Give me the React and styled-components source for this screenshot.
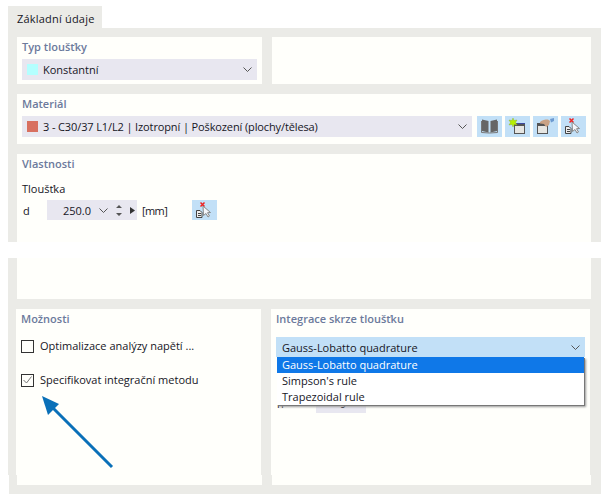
import React from "react"
import styled, { createGlobalStyle } from "styled-components"

const Global = createGlobalStyle`
  html, body { margin: 0; padding: 0; background: #fff; }
  body { font-family: "Open Sans", "Noto Sans", sans-serif; font-size: 11px; color: #16161f; }
`

const Page = styled.div`
  width: 601px;
  height: 494px;
  overflow: hidden;
  padding: 6px 0 0 8px;
  box-sizing: border-box;
`

const Tab = styled.div`
  width: 94px;
  height: 22px;
  background: #ebebe7;
  line-height: 26px;
  padding-left: 9px;
  box-sizing: border-box;
  letter-spacing: 0.2px;
`

const TopSheet = styled.div`
  background: #ebebe7;
  height: 214px;
  padding: 9px 10px 0 9px;
  box-sizing: border-box;
  display: flex;
  flex-direction: column;
  gap: 10px;
`

const MiddleSheet = styled.div`
  background: #ebebe7;
  height: 217px;
  margin-top: 16px;
  padding: 0 10px 0 9px;
  box-sizing: border-box;
  display: flex;
  flex-direction: column;
  gap: 10px;
`

const BottomSheet = styled.div`
  background: #ebebe7;
  height: 19px;
  margin-left: 1px;
  padding-left: 8px;
  box-sizing: border-box;
`

const Columns = styled.div`
  display: grid;
  grid-template-columns: 245px 319px;
  column-gap: 10px;
  transform: ${p => (p.$shift ? "translateX(-1px)" : "none")};
`

const Card = styled.section`
  background: #fffffb;
  box-sizing: border-box;
  height: ${p => p.$height}px;
  flex: ${p => (p.$fill ? "1" : "none")};
  padding: 2px 5px 0;
  min-width: 0;
`

const OverlayCard = styled(Card)`
  position: relative;
`

const CardTitle = styled.h3`
  margin: 0;
  font-size: 11px;
  line-height: 16px;
  font-weight: 600;
  color: #6c7a9c;
`

const Select = styled.div`
  margin-top: ${p => p.$top || 4}px;
  flex: 1;
  height: ${p => p.$height || 21}px;
  background: ${p => (p.$active ? "#c2e0f7" : "#e8e7f0")};
  display: flex;
  align-items: center;
  padding: 0 5px 0 ${p => (p.$active ? 6 : 5)}px;
  gap: 5px;
  letter-spacing: ${p => p.$spacing || 0}px;
`

const Swatch = styled.span`
  width: 11px;
  height: 11px;
  background: ${p => p.$color};
`

const Grow = styled.span`
  flex: 1;
`

const Chevron = () => (
  <svg width="9" height="5" viewBox="0 0 9 5" fill="none" stroke="#555" strokeWidth="1">
    <path d="M.5.5l4 4 4-4" />
  </svg>
)

const BlueButton = styled.button`
  border: 0;
  padding: 0;
  width: 25px;
  height: ${p => p.$height || 21}px;
  background: #c2e0f7;
  display: block;
  overflow: hidden;
  svg { display: block; }
`

const Tools = styled.div`
  display: flex;
  gap: 3px;
  margin: 4px 0 0 5px;
`

const FlexLine = styled.div`
  display: flex;
`

const Book = () => (
  <svg width="25" height="21" viewBox="0 0 25 21">
    <path d="M5 3.500l6.500 1.500v11.500L5 15z" fill="#666" />
    <path d="M20 3.500L13.500 5v11.500L20 15z" fill="#666" />
    <path d="M4.500 5v11.500l8 .5 8-.5V5" fill="none" stroke="#777" />
  </svg>
)

const Window = () => (
  <>
    <rect x="9.500" y="7.500" width="10" height="10" fill="#e6e6e2" stroke="#555" />
    <rect x="9" y="7" width="11" height="3" fill="#555" />
  </>
)

const NewWindow = () => (
  <svg width="25" height="21" viewBox="0 0 25 21">
    <Window />
    <rect x="12" y="7" width="8" height="1" fill="#3b4aa0" />
    <path d="M8 2l1 2.500 3-.5-1.500 2.500L12 9l-3-.5L8 11 7 8.500 4 9l1.500-2.500L4 4l3 .5z" fill="#b5f000" stroke="#8aa820" strokeWidth=".4" />
  </svg>
)

const HandWindow = () => (
  <svg width="25" height="21" viewBox="0 0 25 21">
    <rect x="4.500" y="7.500" width="10" height="10" fill="#e6e6e2" stroke="#555" />
    <rect x="4" y="7" width="11" height="3" fill="#555" />
    <path d="M7 6c2-2 5-2.500 8-2.500l2 1.500-1 4-3 2-2-3-4-.5z" fill="#c9a285" />
    <path d="M17 3l4-1v3l-3 1.500z" fill="#6d9ad0" />
  </svg>
)

const PickIcon = () => (
  <svg width="25" height="21" viewBox="0 0 25 21">
    <path d="M4.500 10.500h3.500l2 2v5h-5.500z" fill="#eee" stroke="#444" />
    <path d="M6 13.500h3M6 15.500h3" stroke="#444" />
    <path d="M8.500 2.500l4 4M12.500 2.500l-4 4" stroke="#ee2222" strokeWidth="1.500" />
    <path d="M11 6l7.500 6.500-3 .2 2 3.300-1.500 1-2-3.500-2.500 2z" fill="#f4f6fb" stroke="#888" />
  </svg>
)

const Label = styled.div`
  margin-top: 9px;
  line-height: 16px;
`

const SpinRow = styled.div`
  display: flex;
  align-items: center;
  margin-top: ${p => p.$top}px;
`

const SpinName = styled.span`
  width: ${p => p.$width}px;
  padding-left: 1px;
  box-sizing: border-box;
`

const Spin = styled.div`
  width: ${p => p.$width}px;
  height: 20px;
  background: #e8e7f0;
  display: flex;
  align-items: center;
  box-sizing: border-box;
  padding-left: ${p => p.$indent}px;
  gap: 8px;
`

const Unit = styled.span`
  margin-left: 5px;
  width: 50px;
  letter-spacing: -0.6px;
`

const Arrows = () => (
  <svg width="6" height="11" viewBox="0 0 6 11" fill="#555">
    <path d="M3 0l3 3H0zM3 11l3-3H0z" />
  </svg>
)

const Play = () => (
  <svg width="5" height="7" viewBox="0 0 5 7" fill="#333">
    <path d="M0 0l5 3.500L0 7z" />
  </svg>
)

const Check = styled.label`
  display: flex;
  align-items: center;
  gap: 6px;
  margin-top: ${p => p.$top}px;
  line-height: 16px;
`

const Box = styled.span`
  width: 11px;
  height: 11px;
  border: 1px solid #333;
  display: flex;
  align-items: center;
  justify-content: center;
`

const Menu = styled.ul`
  position: absolute;
  left: 6px;
  top: 48px;
  width: 307px;
  margin: 0;
  padding: 0;
  list-style: none;
  background: #fff;
  box-shadow: 1px 1px 0 #777, 2px 2px 2px #999;
`

const Item = styled.li`
  height: 16px;
  line-height: 16px;
  padding-left: 5px;
  background: ${p => (p.$on ? "#0f78e8" : "transparent")};
  color: ${p => (p.$on ? "#fff" : "inherit")};
`

const Arrow = styled.svg`
  position: absolute;
  left: 24px;
  top: 86px;
`

const App = () => (
  <Page>
    <Global />
    <Tab>Základní údaje</Tab>
    <TopSheet>
      <Columns>
        <Card $height={47}>
          <CardTitle>Typ tloušťky</CardTitle>
          <Select>
            <Swatch $color="#b4ffff" />
            Konstantní
            <Grow />
            <Chevron />
          </Select>
        </Card>
        <Card $height={47} />
      </Columns>
      <Card $height={50}>
        <CardTitle>Materiál</CardTitle>
        <FlexLine>
          <Select $spacing={-0.12}>
            <Swatch $color="#d87060" />
            3 - C30/37 L1/L2 | Izotropní | Poškození (plochy/tělesa)
            <Grow />
            <Chevron />
          </Select>
          <Tools>
            <BlueButton><Book /></BlueButton>
            <BlueButton><NewWindow /></BlueButton>
            <BlueButton><HandWindow /></BlueButton>
            <BlueButton><PickIcon /></BlueButton>
          </Tools>
        </FlexLine>
      </Card>
      <Card $fill>
        <CardTitle>Vlastnosti</CardTitle>
        <Label>Tloušťka</Label>
        <SpinRow $top={3}>
          <SpinName $width={25}>d</SpinName>
          <Spin $width={90} $indent={16}>
            250.0
            <Chevron />
            <Arrows />
            <Play />
          </Spin>
          <Unit>[mm]</Unit>
          <BlueButton $height={20}><PickIcon /></BlueButton>
        </SpinRow>
      </Card>
    </TopSheet>
    <MiddleSheet>
      <Card $height={41} />
      <Columns $shift>
        <OverlayCard $height={166}>
          <CardTitle>Možnosti</CardTitle>
          <Check $top={11}><Box />Optimalizace analýzy napětí ...</Check>
          <Check $top={18}>
            <Box>
              <svg width="9" height="8" viewBox="0 0 9 8" fill="none" stroke="#777">
                <path d="M.5 4l3 3 5-6.500" />
              </svg>
            </Box>
            Specifikovat integrační metodu
          </Check>
          <Arrow width="76" height="76" viewBox="0 0 76 76">
            <path d="M72 72L13 13" stroke="#0a70b8" strokeWidth="3" />
            <path d="M2 1l17 8L8 20z" fill="#0a70b8" />
          </Arrow>
        </OverlayCard>
        <OverlayCard $height={166}>
          <CardTitle>Integrace skrze tloušťku</CardTitle>
          <Select $active $top={10} $height={20}>
            Gauss-Lobatto quadrature
            <Grow />
            <Chevron />
          </Select>
          <SpinRow $top={36}>
            <SpinName $width={40}>n</SpinName>
            <Spin $width={50} $indent={24}>
              9
              <svg width="7" height="4" viewBox="0 0 7 4" fill="#444">
                <path d="M0 0h7L3.500 4z" />
              </svg>
            </Spin>
          </SpinRow>
          <Menu>
            <Item $on>Gauss-Lobatto quadrature</Item>
            <Item>Simpson's rule</Item>
            <Item>Trapezoidal rule</Item>
          </Menu>
        </OverlayCard>
      </Columns>
    </MiddleSheet>
    <BottomSheet>
      <Columns>
        <Card $height={10} />
        <Card $height={10} />
      </Columns>
    </BottomSheet>
  </Page>
)

export default App
